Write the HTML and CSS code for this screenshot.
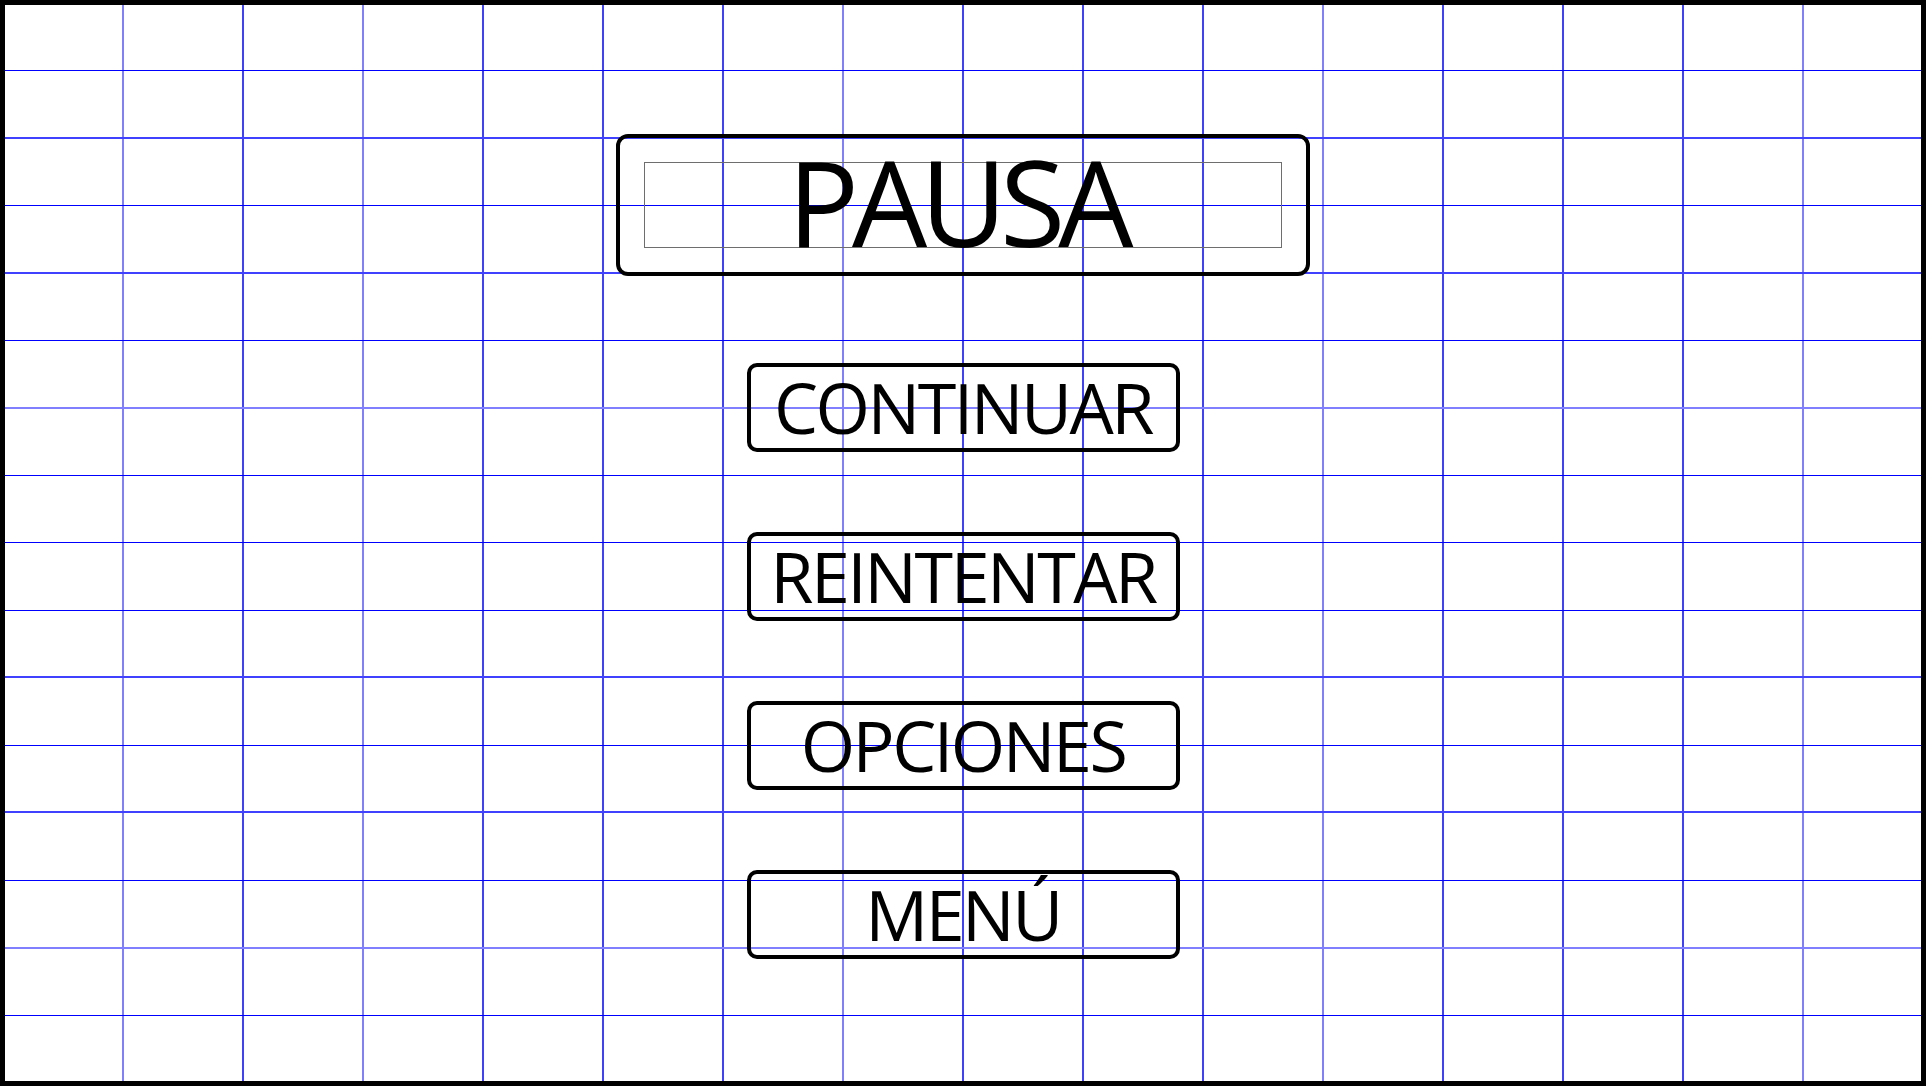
FILE: index.html
```html
<!DOCTYPE html>
<html lang="es">
<head>
    <meta charset="UTF-8">
    <meta name="viewport" content="width=device-width, initial-scale=1.0">
    <title>Pausa</title>
    <link rel="stylesheet" href="styles.css">
</head>
<body>
    <div class="frame">
        <!-- background grid, drawn behind the menu -->
        <svg class="grid-lines" viewBox="0 0 1916 1076" preserveAspectRatio="none" xmlns="http://www.w3.org/2000/svg" shape-rendering="crispEdges">
            <g class="v-lines">
                <rect class="light" x="117" y="0" width="2" height="1076"/>
                <rect class="mid" x="237" y="0" width="2" height="1076"/>
                <rect class="light" x="357" y="0" width="2" height="1076"/>
                <rect class="mid" x="477" y="0" width="2" height="1076"/>
                <rect class="mid" x="597" y="0" width="2" height="1076"/>
                <rect class="mid" x="717" y="0" width="2" height="1076"/>
                <rect class="light" x="837" y="0" width="2" height="1076"/>
                <rect class="mid" x="957" y="0" width="2" height="1076"/>
                <rect class="mid" x="1077" y="0" width="2" height="1076"/>
                <rect class="mid" x="1197" y="0" width="2" height="1076"/>
                <rect class="light" x="1317" y="0" width="2" height="1076"/>
                <rect class="mid" x="1437" y="0" width="2" height="1076"/>
                <rect class="mid" x="1557" y="0" width="2" height="1076"/>
                <rect class="mid" x="1677" y="0" width="2" height="1076"/>
                <rect class="light" x="1797" y="0" width="2" height="1076"/>
            </g>
            <g class="h-lines">
                <rect class="thin" x="0" y="65" width="1916" height="1"/>
                <rect class="mid" x="0" y="132" width="1916" height="2"/>
                <rect class="thin" x="0" y="200" width="1916" height="1"/>
                <rect class="mid" x="0" y="267" width="1916" height="2"/>
                <rect class="thin" x="0" y="335" width="1916" height="1"/>
                <rect class="light" x="0" y="402" width="1916" height="2"/>
                <rect class="thin" x="0" y="470" width="1916" height="1"/>
                <rect class="thin" x="0" y="537" width="1916" height="1"/>
                <rect class="thin" x="0" y="605" width="1916" height="1"/>
                <rect class="mid" x="0" y="671" width="1916" height="2"/>
                <rect class="thin" x="0" y="740" width="1916" height="1"/>
                <rect class="mid" x="0" y="806" width="1916" height="2"/>
                <rect class="thin" x="0" y="875" width="1916" height="1"/>
                <rect class="light" x="0" y="942" width="1916" height="2"/>
                <rect class="thin" x="0" y="1010" width="1916" height="1"/>
            </g>
        </svg>

        <div class="menu">
            <div class="title-box">
                <h1 class="title-frame">PAUSA</h1>
            </div>

            <button class="btn" type="button">CONTINUAR</button>
            <button class="btn" type="button">REINTENTAR</button>
            <button class="btn" type="button">OPCIONES</button>
            <button class="btn" type="button">MENÚ</button>
        </div>
    </div>
</body>
</html>
```

FILE: styles.css
```css
/* Page */
body {
    margin: 0;
    font-family: "Open Sans", "Noto Sans", sans-serif;
    background-color: #ffffff;
    color: #000000;
}

/* Outer frame, grid and menu share the same cell */
.frame {
    width: 1926px;
    height: 1086px;
    box-sizing: border-box;
    border: 5px solid #000000;
    display: grid;
    grid-template-columns: 100%;
    grid-template-rows: 100%;
}
.frame > * {
    grid-area: 1 / 1;
}

/* Grid lines */
.grid-lines {
    display: block;
    width: 100%;
    height: 100%;
}
.grid-lines .thin { fill: #0000ff; }
.grid-lines .mid { fill: #4040ff; }
.grid-lines .light { fill: #8080ff; }

/* Menu column */
.menu {
    display: flex;
    flex-direction: column;
    align-items: center;
    gap: 80px;
    padding-top: 129px;
}

/* Title */
.title-box {
    width: 694px;
    height: 142px;
    box-sizing: border-box;
    border: 4px solid #000000;
    border-radius: 12px;
    padding: 24px;
    margin-bottom: 7px; /* 87px to the first button */
}
.title-frame {
    margin: 0;
    height: 86px;
    box-sizing: border-box;
    border: 1px solid #6e6e6e;
    font-size: 119px;
    font-weight: 400;
    line-height: 76px;
    letter-spacing: -7px;
    text-indent: -12px; /* pull the ink back to the middle */
    text-align: center;
}

/* Buttons */
.btn {
    width: 433px;
    height: 89px;
    box-sizing: border-box;
    padding: 0;
    border: 4px solid #000000;
    border-radius: 10px;
    background: transparent;
    color: #000000;
    font-family: inherit;
    font-size: 70px;
    font-weight: 400;
    line-height: 81px;
    letter-spacing: -2.5px;
    text-align: center;
    cursor: pointer;
}
```
